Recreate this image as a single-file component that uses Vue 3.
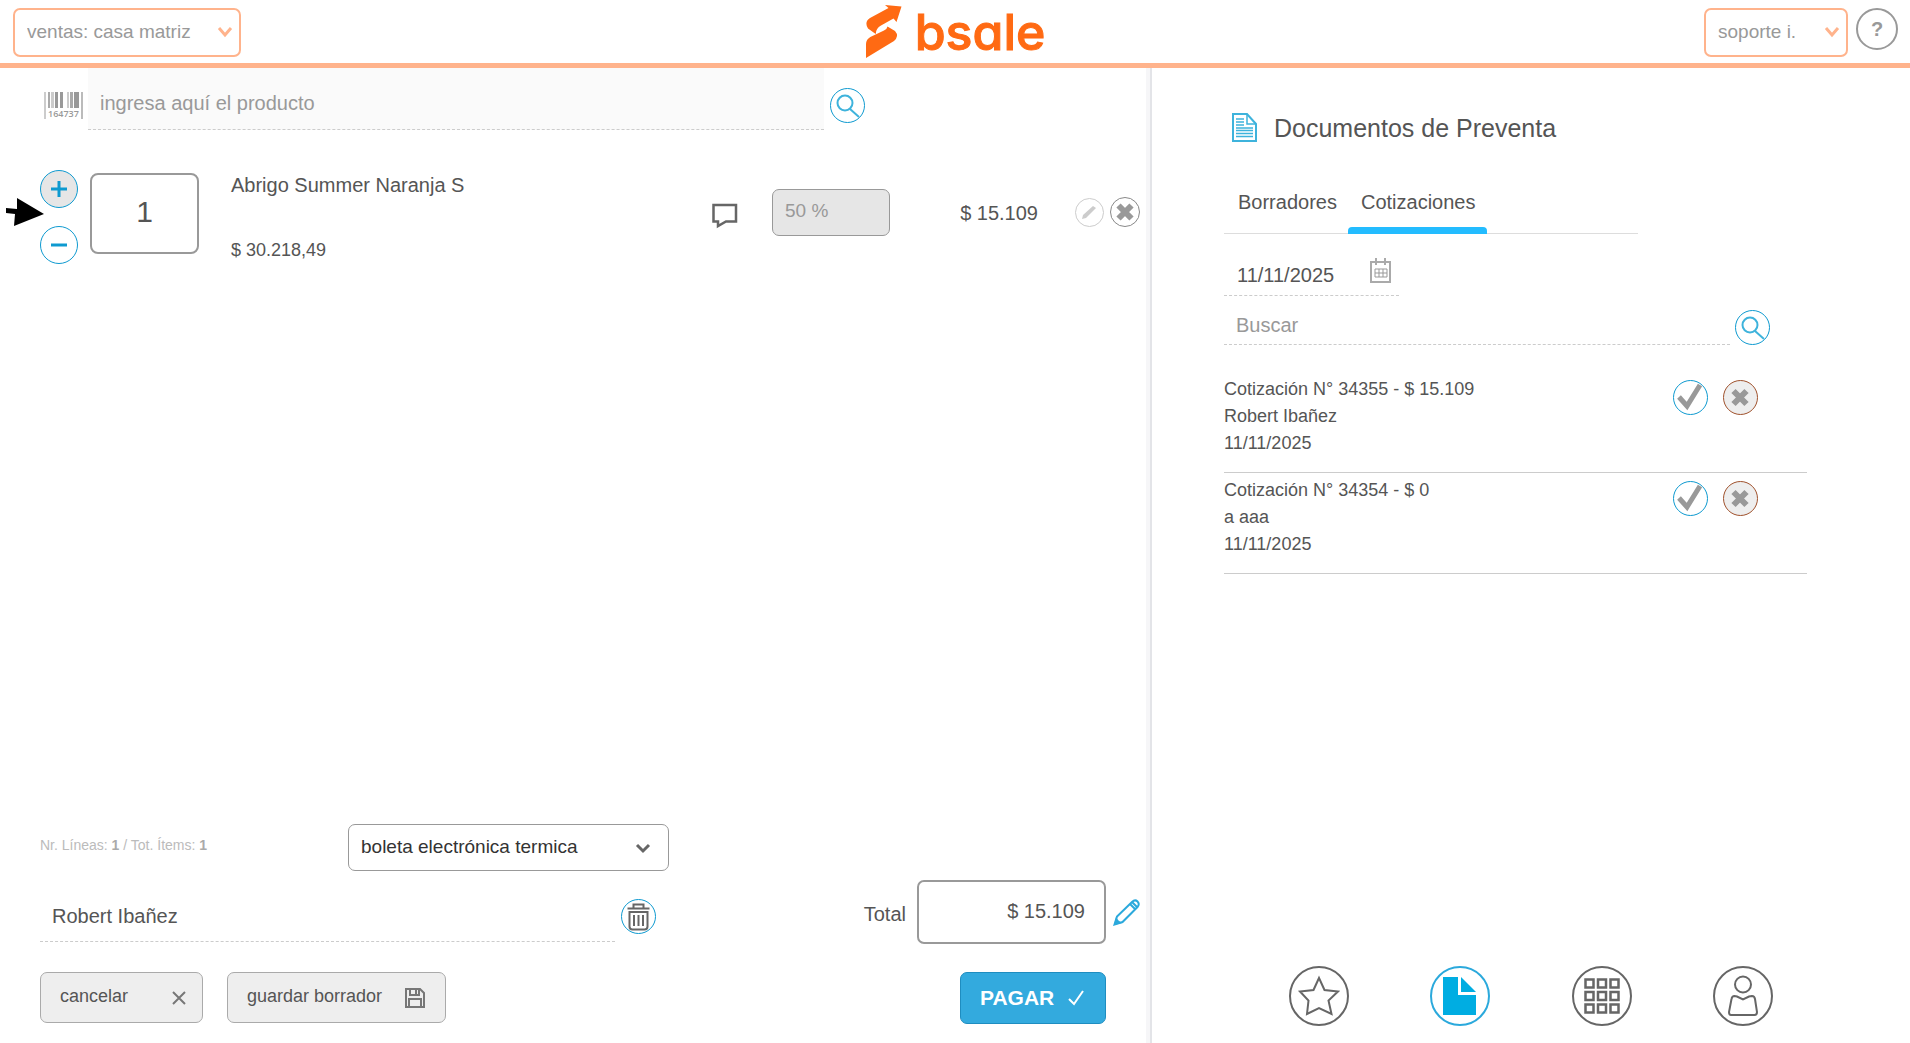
<template>
  <div class="pos">
    <header class="topbar">
      <div class="select-wrap office">
        <select class="orange-select" aria-label="Sucursal">
          <option>ventas: casa matriz</option>
        </select>
        <svg class="chevron" width="16" height="12" viewBox="0 0 16 12"><path d="M2 2l6 7 6-7" /></svg>
      </div>

      <a class="logo" href="#">
        <svg width="36" height="54" viewBox="0 0 36 54">
          <path d="M19 0L35.500 1.500 30.500 17 27.500 13.500 15 20.500Q10 23 9.700 29L2 23.500Q-2 17 4 13L22.500 3z" />
          <path d="M0 53V39Q0 34.500 4.300 32L18 25.500Q21 24.300 21.500 21.500L29 26Q33.500 31 28 36z" />
        </svg>
        <span class="logo-text">bsale</span>
      </a>

      <div class="user-area">
        <div class="select-wrap user">
          <select class="orange-select" aria-label="Usuario">
            <option>soporte i.</option>
          </select>
          <svg class="chevron" width="16" height="12" viewBox="0 0 16 12"><path d="M2 2l6 7 6-7" /></svg>
        </div>
        <button class="help" type="button">?</button>
      </div>
    </header>

    <div class="body">
      <main class="sale">
        <div class="product-bar">
          <svg class="barcode" width="39" height="27" viewBox="0 0 39 27">
            <rect
              v-for="(bar, i) in bars"
              :key="i"
              :x="bar.x"
              y="0"
              :width="bar.w"
              :height="bar.h"
              :fill="bar.c"
            />
            <text x="4" y="25">164737</text>
          </svg>
          <input
            v-model="product"
            class="product-input"
            type="text"
            aria-label="Producto"
            placeholder="ingresa aquí el producto"
          />
          <button class="round" type="button" aria-label="Buscar producto">
            <svg width="33" height="33" viewBox="0 0 33 33" class="lens">
              <circle cx="14" cy="14" r="7.500" />
              <path d="M19 20l9 8" />
            </svg>
          </button>
        </div>

        <div class="line" v-for="item in items" :key="item.name">
          <div class="stepper">
            <button class="step plus" type="button" aria-label="Agregar" @click="item.qty++">
              <svg width="16" height="16" viewBox="0 0 16 16"><path d="M0 8h16M8 0v16" /></svg>
            </button>
            <button class="step" type="button" aria-label="Quitar" @click="removeOne(item)">
              <svg width="16" height="16" viewBox="0 0 16 16"><path d="M0 8h16" /></svg>
            </button>
          </div>
          <input v-model="item.qty" class="qty" type="text" aria-label="Cantidad" />
          <div class="detail">
            <span class="name">{{ item.name }}</span>
            <span class="unit">{{ item.unit }}</span>
          </div>
          <div class="line-side">
            <button class="plain comment" type="button" aria-label="Comentario">
              <svg width="26" height="26" viewBox="0 0 26 26">
                <path d="M1.500 2h22.500v16.500H14L6 23v-4.500H1.500z" />
              </svg>
            </button>
            <input class="discount" type="text" :value="item.discount" aria-label="Descuento" disabled />
            <span class="amount">{{ item.total }}</span>
            <button class="plain edit" type="button" aria-label="Editar">
              <svg width="29" height="29" viewBox="0 0 29 29">
                <circle cx="14.500" cy="14.500" r="14" />
                <path d="M7 21l1-4L18 8l3 2-10 10z" />
              </svg>
            </button>
            <button class="plain remove" type="button" aria-label="Eliminar">
              <svg width="30" height="30" viewBox="0 0 30 30">
                <circle cx="15" cy="15" r="14.500" />
                <path d="M8.500 8.500l13 13M21.500 8.500l-13 13" />
              </svg>
            </button>
          </div>
          <svg class="pointer" width="38" height="29" viewBox="0 0 38 29">
            <path d="M0 10l11 1V0l27 16L8 28l1-12-9-1z" />
          </svg>
        </div>

        <footer class="checkout">
          <div class="row doc-row">
            <p class="counter">Nr. Líneas: <b>1</b> / Tot. Ítems: <b>1</b></p>
            <div class="select-wrap doc">
              <select class="doc-select" aria-label="Tipo de documento">
                <option>boleta electrónica termica</option>
              </select>
              <svg class="chevron" width="16" height="12" viewBox="0 0 16 12"><path d="M2 2l6 6 6-6" /></svg>
            </div>
          </div>

          <div class="row">
            <div class="client">
              <input v-model="client" class="client-input" type="text" aria-label="Cliente" />
              <button class="round" type="button" aria-label="Quitar cliente">
                <svg width="33" height="33" viewBox="0 0 33 33" class="trash">
                  <path d="M5.500 8.500h22M11.500 8V4.500h10V8" />
                  <path d="M7.500 12h18v14.500q0 3-3 3h-12q-3 0-3-3z" />
                  <path d="M12 15v11M16.500 15v11M21 15v11" />
                </svg>
              </button>
            </div>
            <div class="total">
              <label for="total">Total</label>
              <input id="total" class="total-input" type="text" value="$ 15.109" readonly />
              <button class="plain" type="button" aria-label="Editar total">
                <svg class="blue-pencil" width="27" height="27" viewBox="0 0 27 27">
                  <path d="M1.500 25.500L4 17.500 19 3q3-3 5.500-.500T24.500 8L9.500 23z" />
                  <path d="M17 5l5 5M19 3l5.500 5.500" />
                  <path class="fill" d="M1 26l2-8 2.500 3.500L9 24z" />
                </svg>
              </button>
            </div>
          </div>

          <div class="row actions">
            <button class="grey-btn cancel" type="button">
              cancelar
              <svg width="14" height="14" viewBox="0 0 14 14"><path d="M1 1l12 12M13 1L1 13" /></svg>
            </button>
            <button class="grey-btn save" type="button">
              guardar borrador
              <svg width="20" height="20" viewBox="0 0 20 20">
                <path d="M1 1h14l4 4v14H1z" />
                <path d="M5 1v6h9V1M11 2v4M4 19v-8h12v8" />
              </svg>
            </button>
            <button class="pay" type="button">
              PAGAR
              <svg width="17" height="17" viewBox="0 0 17 17"><path d="M1 9l5 5L15 1" /></svg>
            </button>
          </div>
        </footer>
      </main>

      <aside class="side">
        <div class="side-content">
          <h1 class="side-title">
            <svg width="25" height="29" viewBox="0 0 25 29">
              <path class="sheet" d="M1 1h14l9 10v17H1z" />
              <path d="M15 1v10h9" />
              <path d="M4 6h8M4 9h8M4 12h8M4 15h17M4 17.500h17M4 20.500h17M4 23.500h17" />
            </svg>
            Documentos de Preventa
          </h1>

          <nav class="tabs">
            <button
              v-for="t in tabs"
              :key="t"
              class="tab"
              :class="{ active: t === tab }"
              type="button"
              @click="tab = t"
            >
              {{ t }}
            </button>
          </nav>

          <div class="date-field">
            <input v-model="date" type="text" aria-label="Fecha" />
            <svg width="21" height="25" viewBox="0 0 21 25">
              <path d="M1 4h19v20H1z" />
              <path d="M6 0v7M15 0v7" />
              <path class="cells" d="M5 11h12v8H5zM5 15h12M9 11v8M13 11v8" />
            </svg>
          </div>

          <div class="search-field">
            <input v-model="query" type="text" aria-label="Buscar" placeholder="Buscar" />
            <button class="round" type="button" aria-label="Buscar documento">
              <svg width="33" height="33" viewBox="0 0 33 33" class="lens">
                <circle cx="14" cy="14" r="7.500" />
                <path d="M19 20l9 8" />
              </svg>
            </button>
          </div>

          <ul class="quotes">
            <li v-for="q in quotes" :key="q.title" class="quote">
              <div class="quote-text">
                <span>{{ q.title }}</span>
                <span>{{ q.client }}</span>
                <span>{{ q.date }}</span>
              </div>
              <button class="round check" type="button" aria-label="Usar cotización">
                <svg width="33" height="33" viewBox="0 0 33 33"><path d="M5 16l8 9L26 4" /></svg>
              </button>
              <button class="round drop" type="button" aria-label="Eliminar cotización">
                <svg width="33" height="33" viewBox="0 0 33 33"><path d="M9.500 10l13 13M22.500 10l-13 13" /></svg>
              </button>
            </li>
          </ul>
        </div>

        <nav class="bottom-nav">
          <button class="nav-btn" type="button" aria-label="Favoritos">
            <svg width="60" height="60" viewBox="0 0 60 60">
              <circle cx="30" cy="30" r="29" />
              <path d="M30 12l5.500 12L49 25.500l-9.500 9 3 13.500L30 42l-12 6 1.500-13.500L11 25.500l13.500-1.500z" />
            </svg>
          </button>
          <button class="nav-btn current" type="button" aria-label="Documentos">
            <svg width="60" height="60" viewBox="0 0 60 60">
              <circle cx="30" cy="30" r="29" />
              <path d="M13 11h15v18h18v20H13z" />
              <path d="M31 11l15 15H31z" />
            </svg>
          </button>
          <button class="nav-btn" type="button" aria-label="Categorías">
            <svg width="60" height="60" viewBox="0 0 60 60">
              <circle cx="30" cy="30" r="29" />
              <template v-for="y in 3" :key="y">
                <rect v-for="x in 3" :key="x" :x="x * 12.5 + 1" :y="y * 12.5 + 1" width="8" height="8" />
              </template>
            </svg>
          </button>
          <button class="nav-btn" type="button" aria-label="Clientes">
            <svg width="60" height="60" viewBox="0 0 60 60">
              <circle cx="30" cy="30" r="29" />
              <circle cx="30" cy="18.500" r="8" />
              <path d="M21.500 30q-2.500 0-3 3L16 46q0 3 2 3h23.500q2.500 0 2.500-3l-2-13q-.500-3-3-3l-3 .500-6 3-6-3z" />
            </svg>
          </button>
        </nav>
      </aside>
    </div>
  </div>
</template>

<script setup>
import { ref } from 'vue'

const product = ref('')
const client = ref('Robert Ibañez')
const date = ref('11/11/2025')
const query = ref('')

const tabs = ['Borradores', 'Cotizaciones']
const tab = ref('Cotizaciones')

const items = ref([
  {
    name: 'Abrigo Summer Naranja S',
    unit: '$ 30.218,49',
    qty: 1,
    discount: '50 %',
    total: '$ 15.109',
  },
])

const quotes = ref([
  { title: 'Cotización N° 34355 - $ 15.109', client: 'Robert Ibañez', date: '11/11/2025' },
  { title: 'Cotización N° 34354 - $ 0', client: 'a aaa', date: '11/11/2025' },
])

const bars = [
  { x: 0, w: 2, h: 27, c: '#ccc' },
  { x: 4, w: 2, h: 16, c: '#aaa' },
  { x: 7, w: 3, h: 16, c: '#ccc' },
  { x: 11, w: 3, h: 16, c: '#999' },
  { x: 16, w: 3, h: 16, c: '#999' },
  { x: 23, w: 2, h: 16, c: '#ccc' },
  { x: 26, w: 3, h: 16, c: '#aaa' },
  { x: 30, w: 5, h: 16, c: '#999' },
  { x: 37, w: 2, h: 27, c: '#bbb' },
]

function removeOne(item) {
  if (item.qty > 1) item.qty--
}
</script>

<style>
body {
  background: #fff;
}
</style>

<style scoped>
.pos {
  min-height: 100vh;
  display: flex;
  flex-direction: column;
  color: #555;
  font-family: 'Liberation Sans', Arial, sans-serif;
  font-size: 20px;
}

.pos * {
  box-sizing: border-box;
}

button,
input,
select {
  margin: 0;
  padding: 0;
  font: inherit;
  color: inherit;
  border: none;
  background: none;
  outline: none;
}

button {
  cursor: pointer;
}

svg {
  display: block;
  fill: none;
}

input::placeholder {
  color: #999;
  opacity: 1;
}

.topbar {
  display: grid;
  grid-template-columns: 1fr auto 1fr;
  height: 68px;
  padding: 0 12px 0 13px;
  border-bottom: 5px solid #ffb38c;
}

.select-wrap {
  position: relative;
}

.select-wrap select {
  width: 100%;
  height: 100%;
  appearance: none;
  padding: 0 14px 2px 12px;
}

.chevron {
  position: absolute;
  right: 8px;
  top: 50%;
  margin-top: -7px;
  pointer-events: none;
  stroke: #ffb38c;
  stroke-width: 3;
}

.office {
  width: 228px;
  height: 49px;
  margin-top: 8px;
}

.user {
  width: 144px;
  height: 49px;
}

.select-wrap .orange-select {
  border: 2px solid #ffb38c;
  border-radius: 7px;
  color: #999;
  font-size: 19px;
}

.logo {
  display: flex;
  align-items: flex-start;
  gap: 13px;
  padding-top: 5px;
  text-decoration: none;
  color: #ff6a13;
}

.logo svg {
  fill: #ff6a13;
}

.logo-text {
  font-family: Inter, 'Open Sans', sans-serif;
  font-feature-settings: 'cv11';
  font-size: 50px;
  font-weight: 500;
  line-height: 54px;
  -webkit-text-stroke: 1px #ff6a13;
}

.user-area {
  display: flex;
  justify-content: flex-end;
  gap: 8px;
  padding-top: 8px;
}

.help {
  width: 42px;
  height: 42px;
  border: 2px solid #999;
  border-radius: 50%;
  color: #999;
  font-weight: bold;
  line-height: 36px;
}

.body {
  flex: 1;
  display: flex;
}

.sale {
  flex: 0 0 calc(60% + 4px);
  display: flex;
  flex-direction: column;
  padding: 0 6px 19px 40px;
  border-right: 4px solid #f6f6f8;
}

.product-bar {
  display: flex;
  align-items: center;
  width: 75%;
  padding-left: 4px;
}

.barcode {
  flex: none;
  margin: 12px 5px 0 0;
  overflow: visible;
}

.barcode text {
  fill: #999;
  font: 600 9px 'Open Sans', sans-serif;
}

.product-input {
  flex: 1;
  min-width: 0;
  height: 62px;
  padding: 10px 12px 0;
  background: #fafafa;
  border-bottom: 1px dashed #ccc;
}

.round {
  flex: none;
  display: flex;
  width: 35px;
  height: 35px;
  border: 1px solid #0e9ad0;
  border-radius: 50%;
  background: #fff;
}

.product-bar .round {
  margin: 12px 0 0 6px;
}

.lens {
  stroke: #3eb3dc;
  stroke-width: 2;
}

.line {
  position: relative;
  display: flex;
  align-items: flex-start;
  margin-top: 40px;
}

.stepper {
  display: flex;
  flex-direction: column;
  gap: 18px;
  margin-right: 12px;
}

.step {
  display: flex;
  align-items: center;
  justify-content: center;
  width: 38px;
  height: 38px;
  border: 1px solid #0e9ad0;
  border-radius: 50%;
  background: #fff;
}

.step.plus {
  background: #e6e6e6;
}

.step svg {
  stroke: #0e9ad0;
  stroke-width: 3;
}

.qty {
  width: 109px;
  height: 81px;
  margin: 3px 32px 0 0;
  padding-bottom: 4px;
  border: 2px solid #999;
  border-radius: 8px;
  font-size: 30px;
  text-align: center;
}

.detail {
  flex: 1;
  align-self: stretch;
  display: flex;
  flex-direction: column;
  justify-content: space-between;
  line-height: 28px;
}

.name {
  padding-top: 1px;
}

.unit {
  font-size: 18px;
}

.line-side {
  display: flex;
  align-items: center;
  height: 84px;
}

.comment {
  margin: 8px 34px 0 0;
}

.comment svg {
  stroke: #666;
  stroke-width: 2.5;
}

.discount {
  width: 118px;
  height: 47px;
  padding: 0 12px 2px;
  border: 1px solid #999;
  border-radius: 7px;
  background: #e6e6e6;
  color: #999;
  font-size: 19px;
}

.amount {
  width: 148px;
  margin-right: 37px;
  padding-top: 2px;
  text-align: right;
}

.edit {
  margin-right: 6px;
}

.edit circle {
  stroke: #ccc;
}

.edit path {
  fill: #ccc;
}

.remove circle {
  stroke: #888;
}

.remove path {
  stroke: #999;
  stroke-width: 6;
}

.pointer {
  position: absolute;
  left: -34px;
  top: 28px;
  fill: #000;
}

.checkout {
  margin-top: auto;
}

.row {
  display: flex;
  justify-content: space-between;
}

.doc-row {
  justify-content: flex-start;
  margin-bottom: 9px;
}

.counter {
  width: 28%;
  margin: 0;
  line-height: 42px;
  color: #bbb;
  font-size: 14px;
}

.counter b {
  color: #aaa;
}

.doc {
  width: 321px;
  height: 47px;
}

.doc-select {
  border: 1px solid #999;
  border-radius: 7px;
  color: #333;
  font-size: 19px;
}

.doc .chevron {
  right: 18px;
  margin-top: -5px;
  stroke: #666;
}

.client {
  display: flex;
  align-items: flex-end;
  gap: 6px;
  width: 56%;
  padding-bottom: 2px;
}

.client-input {
  flex: 1;
  min-width: 0;
  height: 50px;
  padding: 0 12px;
  border-bottom: 1px dashed #ccc;
}

.client .round {
  margin-bottom: 8px;
}

.trash {
  stroke: #666;
  stroke-width: 2;
}

.total {
  display: flex;
  align-items: center;
}

.total label {
  margin: 4px 11px 0 0;
}

.total-input {
  width: 189px;
  height: 64px;
  margin-right: 7px;
  padding: 0 19px 2px;
  border: 2px solid #999;
  border-radius: 7px;
  text-align: right;
}

.blue-pencil {
  stroke: #2ba9dc;
  stroke-width: 2;
}

.blue-pencil .fill {
  fill: #2ba9dc;
  stroke: none;
}

.actions {
  gap: 24px;
  margin-top: 28px;
}

.grey-btn {
  display: flex;
  align-items: center;
  justify-content: space-between;
  height: 51px;
  padding: 0 20px 2px 19px;
  border: 1px solid #aaa;
  border-radius: 7px;
  background: #eee;
  font-size: 18px;
}

.grey-btn svg {
  margin-top: 2px;
  stroke: #777;
  stroke-width: 2;
}

.cancel {
  width: 163px;
  padding-right: 16px;
}

.save {
  width: 219px;
}

.pay {
  display: flex;
  align-items: center;
  justify-content: space-between;
  width: 146px;
  height: 52px;
  margin: 0 34px 0 auto;
  padding: 0 20px 0 19px;
  border: 1px solid #1f8dc0;
  border-radius: 7px;
  background: #33aade;
  color: #fff;
  font-size: 21px;
  font-weight: bold;
}

.pay svg {
  stroke: #fff;
  stroke-width: 2;
}

.side {
  flex: 1;
  display: flex;
  flex-direction: column;
  justify-content: space-between;
  border-left: 2px solid #e3e4e8;
}

.side-content {
  padding: 41px 103px 0 72px;
}

.side-title {
  display: flex;
  align-items: center;
  gap: 17px;
  height: 38px;
  margin: 0;
  padding-left: 8px;
  font-size: 25px;
  font-weight: normal;
}

.side-title svg {
  margin-bottom: 2px;
  stroke: #3eb3dc;
  stroke-width: 1.5;
}

.side-title .sheet {
  stroke-width: 2;
}

.tabs {
  display: flex;
  width: 71%;
  margin-top: 31px;
  border-bottom: 1px solid #ddd;
}

.tab {
  height: 56px;
  margin-bottom: -1px;
  padding: 0 11px 0 14px;
  border-bottom: 7px solid transparent;
}

.tab.active {
  position: relative;
  padding: 0 12px 0 13px;
}

.tab.active::after {
  content: '';
  position: absolute;
  left: 0;
  right: 0;
  bottom: -7px;
  height: 7px;
  border-radius: 4px 4px 0 0;
  background: #23bcff;
}

.date-field {
  display: flex;
  width: 30%;
  height: 62px;
  padding: 22px 8px 0 13px;
  border-bottom: 1px dashed #ccc;
}

.date-field input {
  flex: 1;
  min-width: 0;
}

.date-field svg {
  margin-top: 2px;
  stroke: #aaa;
  stroke-width: 2;
}

.date-field .cells {
  stroke: #999;
  stroke-width: 1;
}

.search-field {
  display: flex;
  align-items: flex-end;
  gap: 5px;
  margin-right: 37px;
}

.search-field input {
  flex: 1;
  min-width: 0;
  height: 49px;
  padding: 11px 12px 0;
  border-bottom: 1px dashed #ccc;
}

.quotes {
  margin: 27px 0 0;
  padding: 0;
  list-style: none;
}

.quote {
  display: flex;
  align-items: flex-start;
  gap: 15px;
  height: 101px;
  padding-right: 49px;
  border-bottom: 1px solid #ccc;
}

.quote-text {
  flex: 1;
  display: flex;
  flex-direction: column;
  padding-top: 4px;
  font-size: 18px;
  line-height: 27px;
}

.quote .round {
  margin-top: 8px;
}

.check svg {
  stroke: #999;
  stroke-width: 5;
}

.drop {
  border-color: #a0522d;
  background: #eee;
}

.drop svg {
  stroke: #999;
  stroke-width: 6;
}

.bottom-nav {
  display: flex;
  justify-content: space-around;
  padding: 0 96px 17px;
}

.nav-btn svg {
  stroke: #666;
  stroke-width: 2;
}

.nav-btn rect {
  stroke-width: 2.5;
}

.current svg {
  stroke: #2ba9dc;
}

.current path {
  fill: #00ade2;
  stroke: none;
}
</style>
